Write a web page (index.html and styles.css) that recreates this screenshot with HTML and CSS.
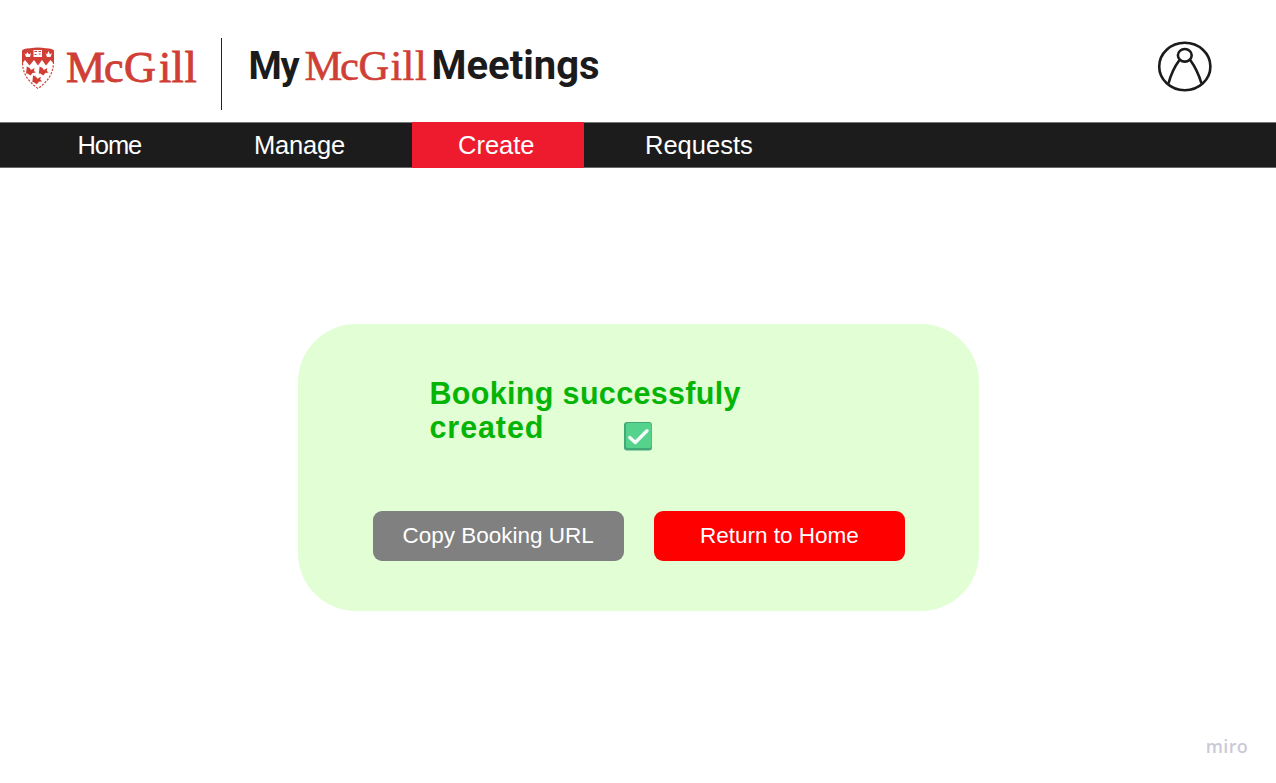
FILE: index.html
```
<!DOCTYPE html>
<html lang="en">
<head>
<meta charset="utf-8">
<title>My McGill Meetings</title>
<link rel="stylesheet" href="styles.css">
</head>
<body>
<header class="header">
  <svg class="shield" width="34" height="43" viewBox="0 0 34 43">
    <path class="crest" d="M1 3.500Q2 1.500 9 1.200Q17 0 25 1.200Q32 1.500 33 3.500V17L29.500 13 25 18.500 21 13 17 18.500 13 13 8.500 18.500 4 13 1 17Z"/>
    <path class="outline" d="M1.500 16C2 28 8 35 17 41.500 26 35 32 28 32.500 16"/>
    <path class="cut" d="M12.500 3h8.500v7h-8.500zM3.500 6l1.500 1.500L6.500 5l1.500 2.500L10 6 9 10H5zM24.500 6l1.500 1.500L27.500 4l1.500 3.500L31 6l-1.500 4H26z"/>
    <path class="mark" d="M13.500 4.500h2.500M13.500 7.500h2M17.500 4.500h2.500M18 7h1.500"/>
    <g class="crest">
      <path id="bird" d="M5.800 19.500l3 1.500 1.200 2 3.500-2-.500 3 2 1.500-3.500.500-2 2.500-3-2-1.500 0z"/>
      <use href="#bird" x="12.800"/>
      <use href="#bird" x="6.300" y="8.800"/>
    </g>
  </svg>
  <svg class="wordmark" width="134" height="48" viewBox="0 0 134 48">
    <text y="33" x="1 39 59 94 106.500 119.500">McGill</text>
  </svg>
  <div class="divider"></div>
  <h1 class="brand">
    <span class="brand-my">My</span>
    <svg class="wordmark wordmark-inline" width="126" height="48" viewBox="0 0 126 48">
      <text y="33" x="1.500 37 55.500 87.500 99.500 112">McGill</text>
    </svg>
    <span class="brand-meetings">Meetings</span>
  </h1>
  <svg class="avatar" width="56" height="52" viewBox="0 0 56 52">
    <ellipse cx="27.800" cy="25.500" rx="25.600" ry="23.700"/>
    <ellipse cx="27.800" cy="14.300" rx="6.900" ry="6.300"/>
    <path d="M22.500 19Q15 29 11.500 42.500M33.200 19Q40.500 29 44.500 42.500"/>
  </svg>
</header>
<nav class="nav">
  <a class="tab tab-home">Home</a>
  <a class="tab tab-manage">Manage</a>
  <a class="tab tab-create">Create</a>
  <a class="tab tab-requests">Requests</a>
</nav>
<main class="main">
  <section class="card">
    <div class="message">
      <h2 class="title">Booking successfuly<br><span class="title-end">created</span></h2>
      <svg class="check" width="28" height="29" viewBox="0 0 28 29">
        <rect width="28" height="28.500" rx="3" fill="#43a877"/>
        <rect x="2" y="1" width="25.500" height="25" rx="2" fill="#55d38c"/>
        <path d="M5.800 15.500l5.500 5L23 8.800" fill="none" stroke="#f4fbf9" stroke-width="3.400" stroke-linecap="round" stroke-linejoin="round"/>
      </svg>
    </div>
    <div class="actions">
      <button class="button button-copy">Copy Booking URL</button>
      <button class="button button-home">Return to Home</button>
    </div>
  </section>
</main>
<footer class="footer">miro</footer>
</body>
</html>
```
FILE: styles.css
```
* { box-sizing: border-box; }
body {
  margin: 0;
  height: 783px;
  display: flex;
  flex-direction: column;
  background: #fff;
  font-family: "Liberation Sans", Arial, sans-serif;
  overflow: hidden;
}
.header {
  height: 122px;
  display: flex;
  align-items: flex-start;
  padding-left: 21px;
}
.shield { margin-top: 47px; }
.crest { fill: #d03f35; }
.outline { fill: none; stroke: #d03f35; stroke-width: 1.2; stroke-dasharray: 2.2 1.4; }
.cut { fill: #fff; }
.mark { fill: none; stroke: #d03f35; stroke-width: 1.2; }
.wordmark {
  margin: 49px 0 0 10px;
  font-family: "Liberation Serif", "Times New Roman", serif;
  font-size: 44px;
  font-weight: 400;
  fill: #d03f35;
  stroke: #d03f35;
  stroke-width: .9;
  flex: none;
  overflow: visible;
}
.divider {
  width: 1px;
  height: 72px;
  margin: 38px .500px 0 22px;
  background: #222;
}
.brand {
  display: flex;
  margin: 0 0 0 26px;
  font: 700 40px/48px Roboto, sans-serif;
  color: #1b1b1b;
}
.brand-my { margin-top: 42px; width: 54px; font-size: 38px; letter-spacing: -1.200px; }
.wordmark-inline { margin: 47px 0 0 0; font-size: 42.500px; stroke-width: .6; }
.brand-meetings { margin: 42px 0 0 3px; }
.avatar {
  margin: 41px 63px 0 auto;
  fill: none;
  stroke: #1b1b1b;
  stroke-width: 2.6;
}
.nav {
  height: 46px;
  display: flex;
  background: #1c1c1c;
  border-top: 1px solid #777;
  border-bottom: 1px solid #666;
  font-size: 25.500px;
  line-height: 45px;
  color: #fff;
}
.tab { white-space: nowrap; }
.tab-home { width: 177px; padding-left: 77.500px; letter-spacing: -1.100px; }
.tab-manage { width: 235px; padding-left: 77px; letter-spacing: -.2px; }
.tab-create { width: 172px; margin: -1px 0; padding: 1px 0 0 46px; background: #ee1b2f; }
.tab-requests { padding-left: 61px; }
.main { padding: 156px 0 0 297.500px; }
.card {
  width: 681.500px;
  height: 287px;
  padding: 53px 74px 0 75px;
  border-radius: 58px;
  background: #e1fed5;
}
.message { display: flex; height: 134px; padding-left: 57px; }
.title {
  width: 194px;
  margin: -1px 0 0;
  font-size: 30.500px;
  line-height: 34px;
  letter-spacing: .33px;
  white-space: nowrap;
  color: #06b406;
}
.title-end { letter-spacing: .9px; }
.check { margin-top: 45px; }
.actions { display: flex; gap: 30px; }
.button {
  width: 251.500px;
  height: 49.500px;
  padding: 0;
  border: 0;
  border-radius: 9px;
  font: 22.500px/49px "Liberation Sans", Arial, sans-serif;
  color: #fff;
}
.button-copy { background: #808080; }
.button-home { background: #f00; }
.footer {
  margin: auto 28px 26px auto;
  font: 600 18px/22px "Open Sans", sans-serif;
  letter-spacing: .3px;
  color: #ccc9d7;
}
```
